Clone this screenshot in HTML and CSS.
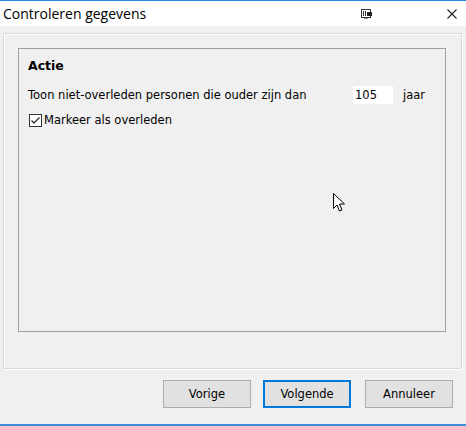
FILE: index.html
```html
<!DOCTYPE html>
<html>
<head>
<meta charset="utf-8">
<link rel="stylesheet" href="styles.css">
</head>
<body>
<div class="window">
  <div class="titlebar">
    <span class="title">Controleren gegevens</span>
    <svg class="pin-icon" width="12" height="11" viewBox="0 0 12 11">
      <rect x="0.5" y="0.5" width="9" height="8" fill="none" stroke="#333" stroke-width="1"/>
      <rect x="2" y="2" width="1" height="5" fill="#333"/>
      <rect x="4" y="2" width="1" height="5" fill="#333"/>
      <rect x="6" y="3" width="5" height="4" fill="#222"/>
      <rect x="3" y="9" width="4" height="1" fill="#888"/>
    </svg>
    <svg class="close-icon" width="10" height="10" viewBox="0 0 10 10">
      <path d="M0.5 0.5 L9.5 9.5 M9.5 0.5 L0.5 9.5" stroke="#222" stroke-width="1.1"/>
    </svg>
  </div>
  <div class="body">
    <div class="outer">
      <div class="inner">
        <div class="heading">Actie</div>
        <div class="row">
          <span class="label">Toon niet-overleden personen die ouder zijn dan</span>
          <span class="input">105</span>
          <span class="unit">jaar</span>
        </div>
        <div class="check-row">
          <svg class="checkbox" width="13" height="13" viewBox="0 0 13 13">
            <rect x="0.5" y="0.5" width="12" height="12" fill="#fff" stroke="#333"/>
            <path d="M2.5 6.5 L5 9 L10.5 3.5" fill="none" stroke="#222" stroke-width="1.2"/>
          </svg>
          <span>Markeer als overleden</span>
        </div>
      </div>
    </div>
    <div class="buttons">
      <button class="btn">Vorige</button>
      <button class="btn default">Volgende</button>
      <button class="btn last">Annuleer</button>
    </div>
  </div>
  <div class="bottom-line"></div>
  <svg class="cursor" width="14" height="20" viewBox="0 0 14 20">
    <path d="M0.5 0.5 L0.5 15.5 L4 12 L6.5 18 L9 17 L6.5 11 L11.5 11 Z" fill="#fff" stroke="#000" stroke-width="1"/>
  </svg>
</div>
</body>
</html>
```
FILE: styles.css
```css
html, body {
  margin: 0;
  padding: 0;
}
body {
  background: #f0f0f0;
  font-family: "DejaVu Sans", sans-serif;
  font-size: 11.5px;
  color: #000;
  width: 466px;
  height: 426px;
  overflow: hidden;
}
.window {
  position: relative;
  width: 466px;
  height: 426px;
  display: flex;
  flex-direction: column;
}
.titlebar {
  height: 25px;
  background: #fff;
  border-top: 1px solid #2b88d8;
  display: flex;
  align-items: center;
  flex-shrink: 0;
}
.title {
  font-family: "Open Sans", "Noto Sans", sans-serif;
  font-size: 14px;
  margin-left: 3px;
  flex: 1;
  color: #000;
}
.pin-icon {
  margin-right: 74px;
  margin-top: 1px;
}
.close-icon {
  margin-right: 9px;
}
.body {
  flex: 1;
  display: flex;
  flex-direction: column;
}
.outer {
  margin: 7px 4px 0 3px;
  height: 336px;
  border: 1px solid #d9d9d9;
  box-shadow: 1px 1px 0 #fff, inset 1px 1px 0 #fff;
  padding: 14px 15px 0 14px;
  box-sizing: border-box;
}
.inner {
  height: 284px;
  border: 1px solid #a0a0a0;
  padding: 8px 0 0 9px;
  box-sizing: border-box;
}
.heading {
  font-weight: bold;
  font-size: 12.5px;
  height: 18px;
  line-height: 18px;
}
.row {
  display: flex;
  align-items: center;
  margin-top: 11px;
  height: 18px;
}
.label {
  width: 325px;
}
.input {
  background: #fff;
  width: 40px;
  height: 18px;
  line-height: 18px;
  padding-left: 2px;
  box-sizing: border-box;
}
.unit {
  margin-left: 10px;
}
.check-row {
  display: flex;
  align-items: center;
  margin-top: 8px;
  height: 16px;
}
.checkbox {
  margin-left: 1px;
  margin-right: 2px;
}
.buttons {
  display: flex;
  justify-content: flex-end;
  margin-top: 11px;
  padding-right: 13px;
}
.btn {
  width: 88px;
  height: 28px;
  background: #e1e1e1;
  border: 1px solid #adadad;
  font-family: "DejaVu Sans", sans-serif;
  font-size: 11.5px;
  color: #000;
  margin: 0 0 0 12px;
  padding: 0;
}
.btn.default {
  border: 2px solid #0078d7;
}
.btn.last {
  margin-left: 14px;
}
.bottom-line {
  position: absolute;
  left: 0;
  right: 0;
  bottom: 0;
  height: 2px;
  background: #3a8fd6;
}
.cursor {
  position: absolute;
  left: 333px;
  top: 193px;
}
```
